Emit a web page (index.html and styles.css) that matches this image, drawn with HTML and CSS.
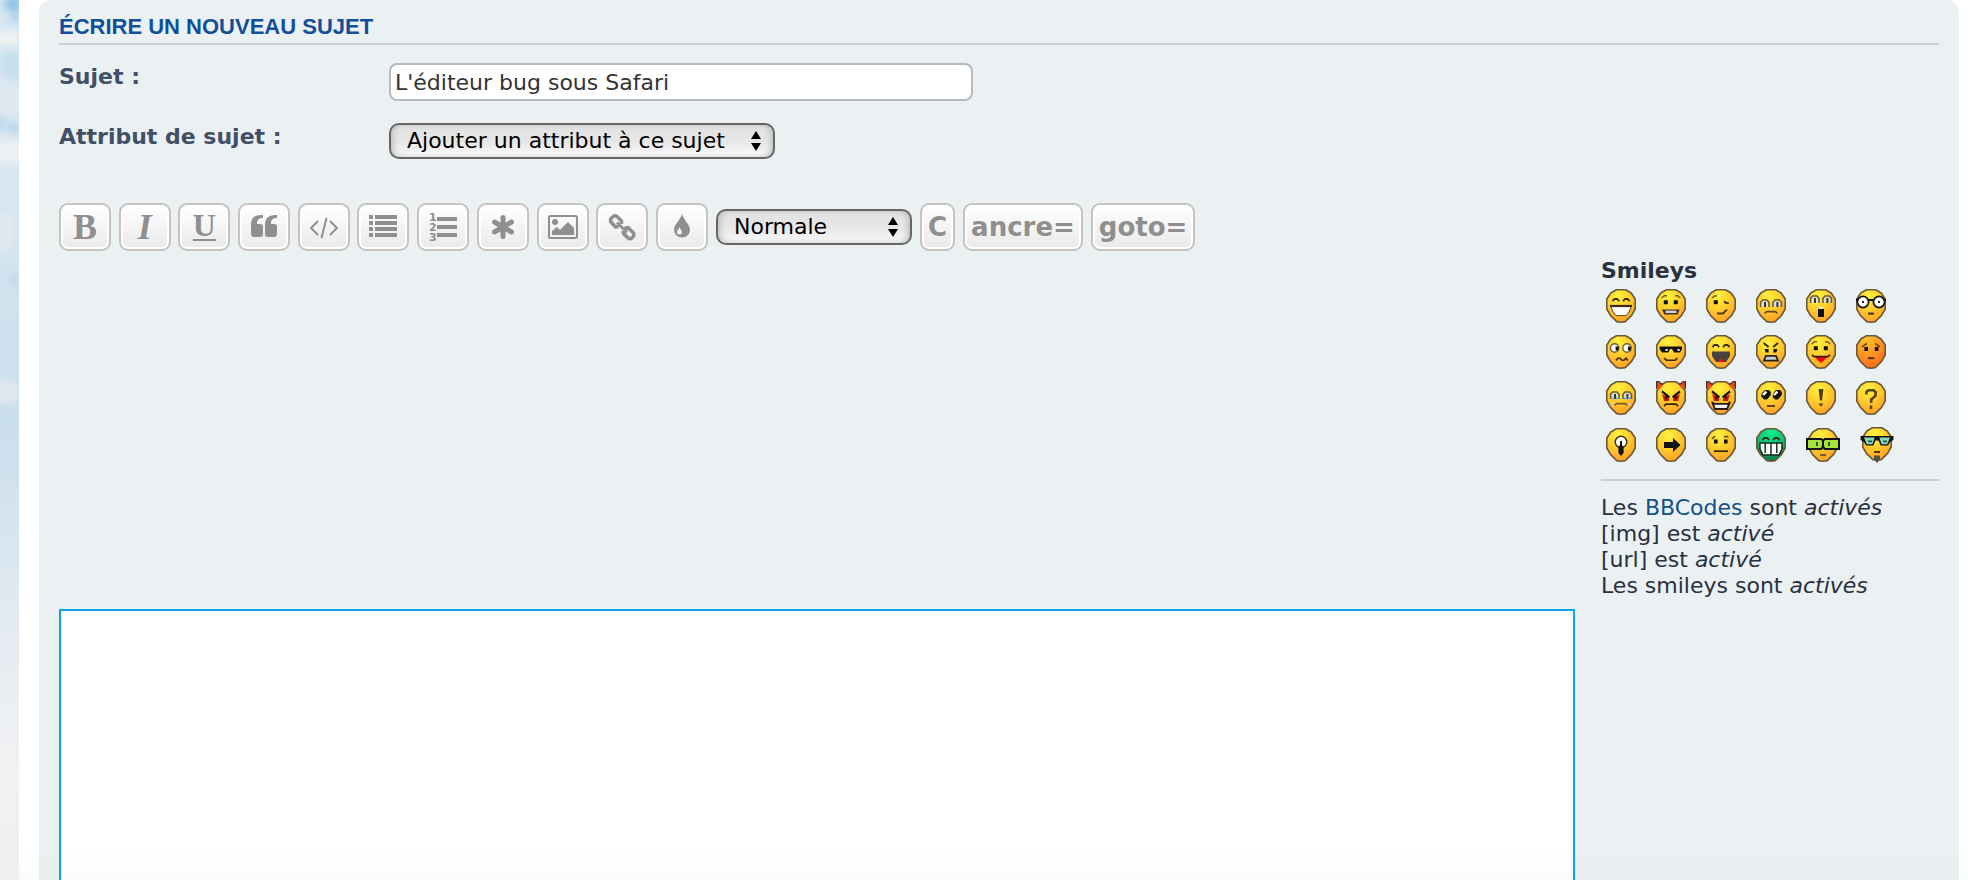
FILE: index.html
```html
<!DOCTYPE html>
<html lang="fr">
<head>
<meta charset="utf-8">
<title>Écrire un nouveau sujet</title>
<link rel="stylesheet" href="styles.css">
</head>
<body>
<svg class="defs" aria-hidden="true">
  <defs>
    <radialGradient id="gold" cx="0.4" cy="0.2" r="0.85"><stop offset="0" stop-color="#fff23c"/><stop offset="0.5" stop-color="#ffcc2e"/><stop offset="1" stop-color="#ff9a22"/></radialGradient>
    <radialGradient id="amber" cx="0.35" cy="0.1" r="0.9"><stop offset="0" stop-color="#ffc42a"/><stop offset="0.5" stop-color="#ff9a24"/><stop offset="1" stop-color="#ff6c18"/></radialGradient>
    <radialGradient id="mint" cx="0.5" cy="0.1" r="0.9"><stop offset="0" stop-color="#08f08c"/><stop offset="0.5" stop-color="#10c47c"/><stop offset="1" stop-color="#087848"/></radialGradient>
    <path id="egg" d="M5.200.4H9.800L12.600 2L14.600 5V10L12.800 13.200L9.600 16.300L7.500 16.600L5.400 16.300L2.200 13.200L.4 10V5L2.400 2Z" stroke="#6b5a3a" stroke-width=".8" stroke-linejoin="round"/>
    <g id="face"><use href="#egg" fill="url(#gold)"/></g>
    <g id="brows" fill="none" stroke="#77601c" stroke-width=".7"><path d="M2.800 4.500L4.200 3.400H5.500M9.500 3.400H10.800L12.200 4.500"/></g>
    <g id="eyes"><path d="M3.900 5.600h2v2h-2zM8.900 5.600h2v2h-2z" fill="#111"/></g>
    <g id="arcs" fill="none" stroke="#3a3010" stroke-width=".9"><path d="M3.200 6.100L4.200 5H5.600L6.600 6.100M8.500 6.100L9.500 5H10.800L11.800 6.100"/></g>
    <g id="lids"><path d="M2.300 9V6.600L3.300 5.500H5.500L6.500 6.600V9M8.500 9V6.600L9.500 5.500H11.700L12.700 6.600V9" fill="#e5dfc7" stroke="#6b5a34" stroke-width=".8"/><path d="M4.500 6.500v2.500M10.700 6.500v2.500" stroke="#333"/></g>
    <g id="horns"><path d="M0 0H1.400L3.300 2.500L1 4.500ZM15 0H13.600L11.700 2.500L14 4.500Z" fill="#f04818"/><path d="M.3 0V4M14.700 0V4" stroke="#3b3434" stroke-width=".8"/><path d="M1 0L3.500 2M14 0L11.500 2" stroke="#3b3434" stroke-width=".6"/></g>
    <g id="rage"><path d="M3 6.500L6.500 8.500V10H4L3.500 8ZM12 6.500L8.500 8.500V10H11L11.500 8Z" fill="#dc1200"/><path d="M3 5.200L6.700 8.200M12 5.200L8.300 8.200" stroke="#17100a" stroke-width="1.100"/><path d="M4.600 7.600h1v1.500h-1zM9.400 7.600h1v1.500h-1z" fill="#200"/></g>
  </defs>
</svg>
<svg class="sky" preserveAspectRatio="none" viewBox="0 0 19 880" aria-hidden="true">
  <defs>
    <linearGradient id="air" x1="0" y1="0" x2="0" y2="1"><stop offset="0" stop-color="#d3e5f1"/><stop offset=".1" stop-color="#dfe9f2"/><stop offset=".3" stop-color="#d2e4ef"/><stop offset=".48" stop-color="#c9deec"/><stop offset=".62" stop-color="#d9e6f0"/><stop offset=".75" stop-color="#e8ecf2"/><stop offset=".88" stop-color="#f1f2f3"/><stop offset="1" stop-color="#efefef"/></linearGradient>
    <filter id="haze" x="-1" y="-1" width="3" height="3"><feGaussianBlur stdDeviation="3"/></filter>
  </defs>
  <rect width="19" height="880" fill="url(#air)"/>
  <g filter="url(#haze)">
    <ellipse cx="13" cy="4" rx="9" ry="7" fill="#8ec2e4"/>
    <ellipse cx="15" cy="17" rx="5" ry="5" fill="#a8d0ea"/>
    <ellipse cx="7" cy="38" rx="14" ry="7" fill="#f1f2f2"/>
    <ellipse cx="12" cy="66" rx="12" ry="15" fill="#c6dfef"/>
    <ellipse cx="2" cy="124" rx="6" ry="8" fill="#bdd9eb"/>
    <ellipse cx="14" cy="128" rx="5" ry="7" fill="#b6d7ea"/>
    <ellipse cx="10" cy="152" rx="16" ry="12" fill="#ecf0f3"/>
    <ellipse cx="4" cy="232" rx="12" ry="20" fill="#e2e8f2"/>
    <ellipse cx="15" cy="280" rx="5" ry="8" fill="#c0d9ea"/>
    <ellipse cx="6" cy="392" rx="18" ry="12" fill="#e0e7f1"/>
  </g>
</svg>
<main class="page">
  <form class="panel">
    <h1 class="title">Écrire un nouveau sujet</h1>
    <div class="fields">
      <label for="subject">Sujet :</label>
      <input class="subject" id="subject" type="text" value="L'éditeur bug sous Safari">
      <label for="prefix">Attribut de sujet :</label>
      <span class="picker prefix">
        <select id="prefix"><option>Ajouter un attribut à ce sujet</option></select>
        <svg class="arrows" viewBox="0 0 10 20" aria-hidden="true"><path d="M5 0L10 8H0ZM5 20L0 12H10Z"/></svg>
      </span>
    </div>
    <div class="toolbar">
      <div class="icons">
        <button type="button" class="tool serif" title="Gras">B</button>
        <button type="button" class="tool serif slanted" title="Italique">I</button>
        <button type="button" class="tool serif under" title="Souligné">U</button>
        <button type="button" class="tool" title="Citation"><svg viewBox="0 0 32 32"><path d="M13 4V7C9 7 7 9 7 11.500V13H10Q13 13 13 16V23Q13 26 10 26H4Q1 26 1 23V14Q1 4 11 4ZM27 4V7C23 7 21 9 21 11.500V13H24Q27 13 27 16V23Q27 26 24 26H18Q15 26 15 23V14Q15 4 25 4Z" transform="translate(2)"/></svg></button>
        <button type="button" class="tool" title="Code"><svg viewBox="0 0 32 32"><path d="M10 10L3 17L10 24M22 10L29 17L22 24M18.500 7L13.500 27" fill="none" stroke="currentColor" stroke-width="2"/></svg></button>
        <button type="button" class="tool" title="Liste"><svg viewBox="0 0 32 32"><path d="M2 4h4v4H2zM8 4H30v4H8zM2 10h4v4H2zM8 10H30v4H8zM2 16h4v4H2zM8 16H30v4H8zM2 22h4v4H2zM8 22H30v4H8z"/></svg></button>
        <button type="button" class="tool" title="Liste ordonnée"><svg viewBox="0 0 32 32"><path d="M10 6H30v4H10zM10 14H30v4H10zM10 22H30v4H10z"/><g class="digits"><text x="2" y="10">1</text><text x="2" y="20">2</text><text x="2" y="30">3</text></g></svg></button>
        <button type="button" class="tool" title="Élément de liste"><svg viewBox="0 0 32 32"><path d="M16 6.500V25.500M7.500 11L24.500 21M24.500 11L7.500 21" stroke="currentColor" stroke-width="5" stroke-linecap="round"/></svg></button>
        <button type="button" class="tool" title="Image"><svg viewBox="0 0 32 32"><rect x="2" y="5" width="28" height="22" rx="1.500" fill="none" stroke="currentColor" stroke-width="2"/><circle cx="8" cy="11" r="3"/><path d="M5 24V20L10 16L13 19L21 11L27 17V24Z"/></svg></button>
        <button type="button" class="tool" title="Lien"><svg viewBox="0 0 32 32"><g fill="none" stroke="currentColor" stroke-width="3.500" stroke-linejoin="round"><path d="M12.500 15.500L9.500 16L4.500 10.500Q3.800 8.800 5.500 7L7.500 5.200Q9.500 4 11.500 6L15.500 10V13"/><path d="M18.500 17.500L22 16.500L27.500 22Q28.500 24 27 25.800L25.500 27.200Q23.500 28.500 21.500 26.500L17.500 22.500L17 20"/><path d="M11 11.500L21 21.500" stroke-width="3"/></g></svg></button>
        <button type="button" class="tool" title="Couleur"><svg viewBox="0 0 32 32"><path d="M16 3C18 10 24 13 24 19A8 7.500 0 0 1 8 19C8 13 14 10 16 3Z"/><path d="M13.500 16C14 18 16 19.500 16 21A2.500 2.500 0 0 1 11 21C11 19.500 13 18 13.500 16Z" fill="#f4f4f4"/></svg></button>
      </div>
      <span class="picker size">
        <select aria-label="Taille"><option>Normale</option></select>
        <svg class="arrows" viewBox="0 0 10 20" aria-hidden="true"><path d="M5 0L10 8H0ZM5 20L0 12H10Z"/></svg>
      </span>
      <button type="button" class="tool word">C</button>
      <button type="button" class="tool word">ancre=</button>
      <button type="button" class="tool word">goto=</button>
    </div>
    <div class="compose">
      <aside class="side">
        <strong>Smileys</strong>
        <div class="smileys">
          <svg viewBox="0 0 15 17"><use href="#face"/><use href="#arcs"/><path d="M2.300 8.500H12.700L11.500 11.500L10 13.300H5L3.500 11.500Z" fill="#fff" stroke="#5a4514" stroke-width=".5"/><path d="M2 8.500H13" stroke="#3b2a10" stroke-width="1.100"/></svg>
          <svg viewBox="0 0 15 17"><use href="#face"/><use href="#brows"/><use href="#eyes"/><path d="M3 10.200H11.800L10.800 12.700H4.200Z" fill="#403421"/><path d="M4.800 11.400H10.200" stroke="#cfd3de" stroke-width="1.200"/></svg>
          <svg viewBox="0 0 15 17"><use href="#face"/><path d="M3 4.500L4.200 3.500H5.500" fill="none" stroke="#77601c" stroke-width=".7"/><path d="M3.900 5.600h2v2h-2z" fill="#111"/><path d="M9 6.100L10 7H11.400M5.500 12.200H8.500L10.500 10.300" fill="none" stroke="#4d3c12"/></svg>
          <svg viewBox="0 0 15 17"><use href="#face"/><use href="#lids"/><path d="M4.300 12.200L5.300 11.300H9.700L10.700 12.200" fill="none" stroke="#664918" stroke-width=".8"/></svg>
          <svg viewBox="0 0 15 17"><use href="#face"/><g transform="translate(0 -2)"><use href="#lids"/></g><path d="M6 9.800h3V14H6z" fill="#111"/><path d="M6.300 9.500h2.400" stroke="#f2e9d0"/></svg>
          <svg viewBox="0 0 15 17"><use href="#face"/><path d="M0 5.500H15" stroke="#111"/><circle cx="3.500" cy="6.500" r="2.800" fill="#fff" stroke="#151515" stroke-width=".9"/><circle cx="11.500" cy="6.500" r="2.800" fill="#fff" stroke="#151515" stroke-width=".9"/><path d="M3 6h1v1H3zM11 6h1v1h-1z" fill="#222"/><path d="M6 12.300h3" stroke="#3b2a10"/></svg>

          <svg viewBox="0 0 15 17"><use href="#face"/><circle cx="4.300" cy="6.500" r="2.100" fill="#fff" stroke="#735f34" stroke-width=".7"/><circle cx="10.500" cy="6.500" r="2.100" fill="#fff" stroke="#735f34" stroke-width=".7"/><path d="M4.800 5.700h1.400v2H4.800zM11 5.700h1.400v2H11z" fill="#111"/><path d="M5 12.700L6 11.600H7L8 12.600H9L10 11.600L10.900 12.700" fill="none" stroke="#3b2a10" stroke-width=".8"/></svg>
          <svg viewBox="0 0 15 17"><use href="#face"/><path d="M1.800 5.800H13V7L12 8.700H9L8 7H7L6.200 8.700H3L1.800 7Z" fill="#111"/><path d="M4.700 7.500h1.200M10.700 7.500h1.200" stroke="#d8d8d8"/><path d="M4 11.600L5.200 12.600H9.600L10.700 11.600" fill="none" stroke="#3b2a10" stroke-width=".8"/></svg>
          <svg viewBox="0 0 15 17"><use href="#face"/><use href="#arcs"/><path d="M3 8.200H12V10.500L10 13.500H5L3 10.500Z" fill="#474340"/><path d="M6 12.300h3l-.6 1.200H6.600z" fill="#f01010"/></svg>
          <svg viewBox="0 0 15 17"><use href="#face"/><path d="M3.800 4L6.300 6M11 4L8.600 6" stroke="#33260c" stroke-width=".9"/><path d="M4.300 7h2v1.700h-1.500zM8.700 7h2l-.5 1.700h-1.500z" fill="#111"/><path d="M4.900 10.400H10L11 12.800H4Z" fill="#c8cad4" stroke="#2b2010" stroke-width=".9"/></svg>
          <svg viewBox="0 0 15 17"><use href="#face"/><use href="#brows"/><use href="#eyes"/><path d="M4.300 10.700H10.800L9.500 12.200L7.500 14L5.500 12.200Z" fill="#fa0a0a"/><path d="M3 9.900L4 10.800H11L12 9.900" fill="none" stroke="#3b1a08" stroke-width=".9"/></svg>
          <svg viewBox="0 0 15 17"><use href="#egg" fill="url(#amber)"/><path d="M3 6L5.500 4.200M12 6L9.500 4.200" stroke="#7b400c" stroke-width=".8"/><path d="M4.200 6h1.800v2H4.200zM9.400 6h1.800v2H9.400z" fill="#1a1008"/><path d="M6 11.600h3.200" stroke="#4b2508" stroke-width=".9"/></svg>

          <svg viewBox="0 0 15 17"><use href="#face"/><use href="#lids"/><path d="M2.800 8.700h1.500M5 8.700h1.500M9 8.700h1.500M11.200 8.700h1.300" stroke="#74a9cc" stroke-width=".9"/><path d="M4.300 12.200L5.300 11.300H9.700L10.700 12.200" fill="none" stroke="#7d5a22" stroke-width=".8"/><path d="M2.700 11.200l1 1M12.300 11.200l-1 1" stroke="#c5d0d4" stroke-width=".8"/></svg>
          <svg viewBox="0 0 15 17"><use href="#face"/><use href="#horns"/><use href="#rage"/><path d="M4 12.600L5 11.600H10L11 12.600" fill="none" stroke="#3b2008" stroke-width=".9"/></svg>
          <svg viewBox="0 0 15 17"><use href="#face"/><use href="#horns"/><use href="#rage"/><path d="M3 10.400L4 11.400H11L12 10.400L10.500 14H4.500Z" fill="#eef0f4" stroke="#2a180a" stroke-width=".9"/></svg>
          <svg viewBox="0 0 15 17"><use href="#face"/><path d="M3 6L4.500 4.500H6.500L7.400 5.500V7L5.500 9.200H4L2.500 7.500ZM8.700 6L10 4.500H12L12.900 5.500V7L11 9.200H9.500L8.300 8Z" fill="#111"/><path d="M3.500 7L5.200 5.300M9 7L10.700 5.300" stroke="#fff" stroke-width="1.200"/><path d="M5.500 12.500H9.500" stroke="#4b3515" stroke-width=".9"/></svg>
          <svg viewBox="0 0 15 17"><use href="#face"/><path d="M6.300 4H8.700L8 9.800H7ZM6.300 11.300H8.700L7.500 12.900Z" fill="#4b3c10"/></svg>
          <svg viewBox="0 0 15 17"><use href="#face"/><path d="M5.200 6.700V5.500L6.200 4.600H8.800L9.800 5.500V7.300L7.600 9.300V11M7.500 12.300V14" fill="none" stroke="#5a4614" stroke-width="1.300"/></svg>

          <svg viewBox="0 0 15 17"><use href="#face"/><circle cx="7.500" cy="7" r="2.900" fill="#fff" stroke="#33290f" stroke-width=".7"/><path d="M6.200 9.500L7.500 8L8.800 9.500V12.500L7.500 14L6.200 12.500ZM7 6.500h1v3H7z" fill="#111"/></svg>
          <svg viewBox="0 0 15 17"><use href="#face"/><path d="M4 7H8.500V5L12.300 8.500L8.500 12V10H4Z" fill="#111"/></svg>
          <svg viewBox="0 0 15 17"><use href="#face"/><path d="M3 5.500L4.500 4M9 4.300H11.200" stroke="#5f4b18" stroke-width=".8"/><path d="M4 5.700h1.800v2H4zM9 5.700h1.800v2H9z" fill="#111"/><path d="M4 11.600H11" stroke="#3b2a10" stroke-width=".9"/></svg>
          <svg viewBox="0 0 15 17"><use href="#egg" fill="url(#mint)"/><use href="#arcs"/><path d="M2 7.500H13V10.500L11.500 13.500H3.500L2 10.500Z" fill="#fff" stroke="#0a2a1a" stroke-width=".7"/><path d="M4.600 7.500V12.500M7.500 7.500V13.500M10.400 7.500V12.500" stroke="#0b2218" stroke-width=".7"/></svg>
          <svg class="wide" viewBox="0 0 17 17"><g transform="translate(1)"><use href="#face"/></g><path d="M.5 5.500H7.700L8.500 6.500L9.300 5.500H16.500V10.500H9.300L8.500 9L7.700 10.500H.5Z" fill="#a6e23a" stroke="#111"/><path d="M8.500 6V10" stroke="#111"/><path d="M5.500 7v2M11.500 7v2" stroke="#34501a"/><path d="M7 13.500h3" stroke="#6b5230" stroke-width=".9"/></svg>
          <svg class="wide tall" viewBox="0 0 17 18"><g transform="translate(1)"><use href="#face"/></g><path d="M.3 4.500H16.700V6.500L15 7.500L14 9.300H10.300L9.300 6.700H7.700L6.700 9.300H3L2 7.500L.3 6.500Z" fill="#111"/><path d="M2 5.200H7.300L6.200 8.600H3.400ZM9.700 5.200H15L13.600 8.600H10.800Z" fill="#86d8b8"/><path d="M4 7.200h2M11.500 7.200h2" stroke="#26584a" stroke-width=".8"/><path d="M7 12.500h3" stroke="#3b2a10" stroke-width=".9"/><path d="M7 14.300H10V16.300L8.500 18L7 16.300Z" fill="#585048"/></svg>
        </div>
        <hr>
        <p class="status">Les <a href="#bbcode">BBCodes</a> sont <em>activés</em><br>[img] est <em>activé</em><br>[url] est <em>activé</em><br>Les smileys sont <em>activés</em></p>
      </aside>
      <textarea class="message" aria-label="Message"></textarea>
    </div>
  </form>
</main>
</body>
</html>
```

FILE: styles.css
```css
* { box-sizing: border-box; }

body {
  margin: 0;
  min-height: 100vh;
  display: flex;
  background: #fff;
  color: #28313f;
  font: 22px/26px "DejaVu Sans", Verdana, sans-serif;
}

button, input, select, textarea { font: inherit; }

.defs { position: absolute; width: 0; height: 0; }

.sky { flex: none; width: 19px; height: 100vh; }

.page {
  flex: 1;
  min-width: 0;
  display: flex;
  padding: 0 9px 0 20px;
  background: linear-gradient(#fff calc(100% - 30px), #fcfcfc);
}

.panel {
  flex: 1;
  min-width: 0;
  display: flex;
  flex-direction: column;
  padding: 14px 20px 0;
  border-radius: 12px 12px 0 0;
  background: linear-gradient(#ebf0f3 calc(100% - 30px), #e8edf0);
}

.title {
  margin: 0;
  padding-bottom: 3px;
  border-bottom: 2px solid #ccc;
  color: #115098;
  font: bold 22px/26px "Liberation Sans", Arial, sans-serif;
  text-transform: uppercase;
}

.fields {
  display: grid;
  grid-template-columns: 330px 1fr;
  row-gap: 22px;
  padding-top: 18px;
}

.fields label { padding-top: 1px; color: #425067; font-weight: bold; }

.subject {
  width: 584px;
  height: 38px;
  padding: 1px 4px 0;
  border: 2px solid #b4bac0;
  border-radius: 8px;
  background: #fff;
  color: #333;
}

.picker { position: relative; display: block; height: 36px; }
.prefix { width: 386px; }
.size { width: 196px; }

.picker select {
  appearance: none;
  width: 100%;
  height: 100%;
  padding: 0 36px 0 16px;
  border: 2px solid #666;
  border-radius: 10px;
  background: linear-gradient(#e2e2e2, #e6e6e6 50%, #fafafa);
  box-shadow: inset 4px 0 6px -2px #bbb, inset -4px 0 6px -2px #bbb;
  color: #000;
}

.arrows {
  position: absolute;
  top: 8px;
  right: 14px;
  width: 10px;
  height: 20px;
  pointer-events: none;
}

.toolbar {
  display: flex;
  align-items: center;
  gap: 8px;
  padding-top: 44px;
}

.icons {
  display: flex;
  justify-content: space-between;
  width: 649px;
}

.tool {
  display: grid;
  place-items: center;
  width: 52px;
  height: 48px;
  padding: 0;
  border: 2px solid #c7c3bf;
  border-radius: 9px;
  background: linear-gradient(#fff, #e9e9e9);
  box-shadow: inset 0 0 0 2px #fff;
  color: #8f8f8f;
}

.tool svg { width: 32px; height: 32px; fill: currentColor; overflow: visible; }

.serif { font: bold 36px/40px "Liberation Serif", "Times New Roman", serif; }
.slanted { font-style: italic; }
.under { font-size: 32px; line-height: 36px; text-decoration: underline; text-decoration-thickness: 2px; text-underline-offset: 3px; padding-bottom: 4px; }
.digits { font: bold 11px "DejaVu Sans", sans-serif; }

.word { width: auto; padding: 0 6px; font-size: 26px; font-weight: bold; }

.compose {
  flex: 1;
  display: grid;
  grid-template-columns: minmax(0, 1fr) 338px;
  grid-template-rows: auto 1fr;
  column-gap: 26px;
  padding-top: 7px;
}

.side { grid-column: 2; }
.side strong { display: block; }

.smileys {
  display: grid;
  grid-template-columns: repeat(6, 50px);
  grid-template-rows: repeat(3, 46px) 48px;
  align-items: center;
  height: 190px;
  padding: 0 0 0 5px;
  margin-top: -1px;
}

.smileys svg { width: 30px; height: 34px; }
.smileys .wide { width: 34px; }
.smileys .tall { height: 36px; margin-left: 4px; }

.side hr { margin: 6px 0 14px; border: 0; border-top: 2px solid #ccc; }

.status { margin: 0 0 10px; }
.status a { color: #105289; text-decoration: none; }

.message {
  grid-column: 1;
  display: block;
  width: 100%;
  height: 100%;
  padding: 4px;
  border: 2px solid #0aa5e2;
  border-bottom: 0;
  background: linear-gradient(#fff calc(100% - 30px), #fcfcfc);
  resize: none;
  outline: 0;
}
```
